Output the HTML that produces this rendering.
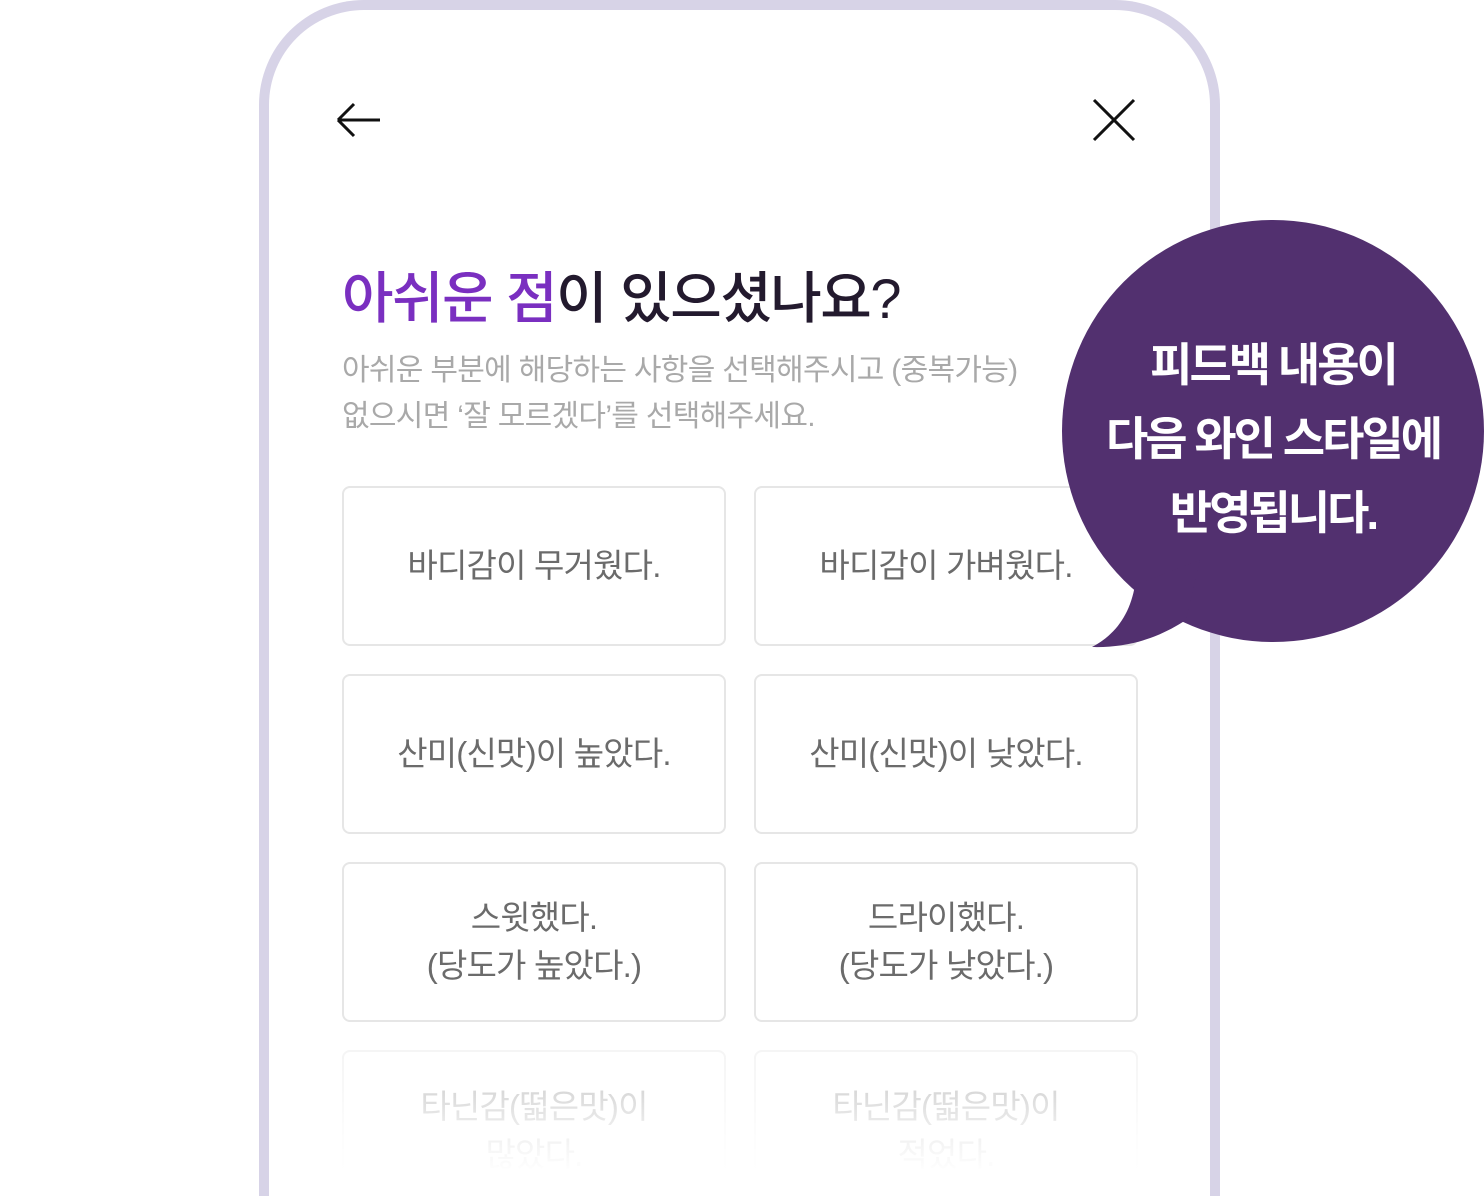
<!DOCTYPE html>
<html style="width:1484px;height:1196px;overflow:hidden"><head><meta charset="utf-8"><style>
*{margin:0;padding:0;box-sizing:border-box}
body{width:1484px;height:1196px;background:#fff;position:relative;overflow:hidden;font-family:"Liberation Sans","Noto Sans CJK KR",sans-serif}
.phone{position:absolute;left:259px;top:0;width:961px;height:1196px;border:10px solid #d7d3e7;border-bottom:0;border-radius:105px 105px 0 0;background:#fff}
.t{position:absolute;left:342px;top:254px;font-size:56px;font-weight:500;color:#231a2e;letter-spacing:-1.5px;white-space:nowrap}
.t span{color:#7a2fc0}
.s{position:absolute;left:342px;top:348px;font-size:30px;line-height:46px;color:#a9a9a9;letter-spacing:-0.7px;white-space:nowrap}
.b{position:absolute;width:384px;height:160px;border:2px solid #e6e6e6;border-radius:8px;display:flex;align-items:center;justify-content:center;text-align:center;font-size:33px;line-height:48px;color:#6b6b6b;letter-spacing:-0.8px;background:#fff}
.b.l{height:146px;border-bottom:0;border-radius:8px 8px 0 0}
.fade{position:absolute;left:269px;top:1040px;width:941px;height:156px;background:linear-gradient(rgba(255,255,255,0.55),rgba(255,255,255,0.9) 60%,#fff 85%)}
.bub{position:absolute;left:0;top:0}
.bt{position:absolute;left:1062px;top:328px;width:422px;text-align:center;color:#fff;font-size:46px;font-weight:bold;line-height:74px;letter-spacing:-3px}
</style></head><body>
<div class="phone"></div>
<svg style="position:absolute;left:0;top:0" width="1484" height="1196">
<path d="M338 120H380M338 120L354 104M338 120L354 136" stroke="#111" stroke-width="3" fill="none"/>
<path d="M1094 100L1134 140M1134 100L1094 140" stroke="#111" stroke-width="3" fill="none"/>
</svg>
<div class="t"><span>아쉬운 점</span>이 있으셨나요?</div>
<div class="s">아쉬운 부분에 해당하는 사항을 선택해주시고 (중복가능)<br>없으시면 ‘잘 모르겠다’를 선택해주세요.</div>
<div class="b" style="left:342px;top:486px">바디감이 무거웠다.</div>
<div class="b" style="left:754px;top:486px">바디감이 가벼웠다.</div>
<div class="b" style="left:342px;top:674px">산미(신맛)이 높았다.</div>
<div class="b" style="left:754px;top:674px">산미(신맛)이 낮았다.</div>
<div class="b" style="left:342px;top:862px">스윗했다.<br>(당도가 높았다.)</div>
<div class="b" style="left:754px;top:862px">드라이했다.<br>(당도가 낮았다.)</div>
<div class="b l" style="left:342px;top:1050px;padding-top:14px">타닌감(떫은맛)이<br>많았다.</div>
<div class="b l" style="left:754px;top:1050px;padding-top:14px">타닌감(떫은맛)이<br>적었다.</div>
<div class="fade"></div>
<svg class="bub" width="1484" height="1196">
<circle cx="1273" cy="431" r="211" fill="#52306f"/>
<path d="M1135 585C1130 615 1115 635 1092 647C1130 648 1160 637 1186 620L1200 560Z" fill="#52306f"/>
</svg>
<div class="bt">피드백 내용이<br>다음 와인 스타일에<br>반영됩니다.</div>
</body></html>
